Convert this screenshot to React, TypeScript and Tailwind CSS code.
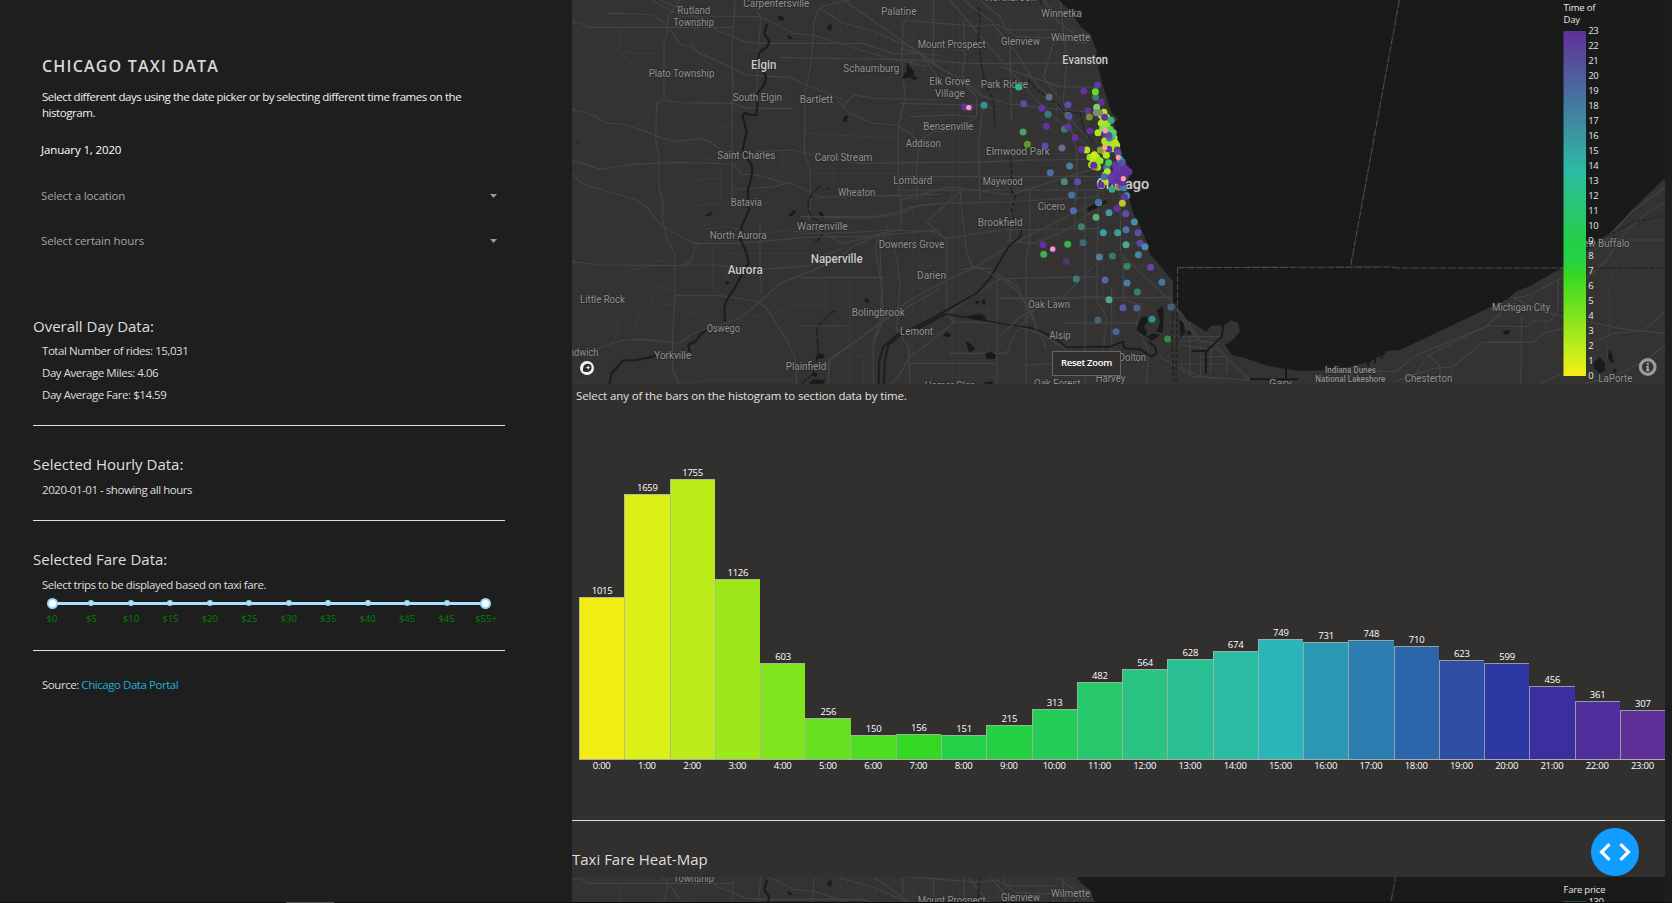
import React from "react";

type Label = [string, number, number, number, ("city" | "big" | "small")?];

const LABELS: Label[] = [
  ["Carpentersville", 743.3, 809.3, 6.7],
  ["Rutland", 677.3, 710.3, 14],
  ["Township", 673.3, 714, 26.3],
  ["Palatine", 881.3, 916.3, 15],
  ["Plato Township", 648.7, 714.3, 77],
  ["Elgin", 751, 776.3, 69, "city"],
  ["Schaumburg", 843.3, 899.3, 71.7],
  ["South Elgin", 732.7, 782, 100.5],
  ["Bartlett", 799.7, 833, 102.7],
  ["Saint Charles", 717.3, 775.3, 159.3],
  ["Carol Stream", 814.7, 872.3, 160.6],
  ["Lombard", 893.3, 932.3, 184.3],
  ["Wheaton", 838, 875.3, 195.6],
  ["Batavia", 730.7, 762, 206.3],
  ["Warrenville", 797, 847.7, 230],
  ["North Aurora", 709.7, 766.7, 238.6],
  ["Naperville", 810.7, 862.7, 263.3, "city"],
  ["Aurora", 727.7, 762.7, 274.3, "city"],
  ["Little Rock", 580, 625, 303.3],
  ["Bolingbrook", 851.7, 904.7, 316],
  ["Oswego", 706.7, 740, 331.6],
  ["Lemont", 900, 933, 335.3],
  ["Yorkville", 654.3, 691.3, 359.3],
  ["Sandwich", 558.5, 598.3, 355.8],
  ["Plainfield", 785.7, 826.3, 369.6],
  ["Northbrook", 985.3, 1035.7, 0.7],
  ["Winnetka", 1041.3, 1081.7, 17],
  ["Wilmette", 1051, 1090.3, 40.7],
  ["Glenview", 1001, 1040, 44.7],
  ["Mount Prospect", 917.7, 985.7, 47.5],
  ["Evanston", 1062.3, 1108, 64, "city"],
  ["Elk Grove", 929.3, 970.3, 85],
  ["Village", 935, 964.7, 97],
  ["Park Ridge", 980.7, 1028, 87.9],
  ["Bensenville", 923.3, 973.3, 130],
  ["Addison", 905.7, 940.7, 146.5],
  ["Elmwood Park", 986, 1049.7, 154.7],
  ["Maywood", 982.7, 1022.7, 185],
  ["Chicago", 1096.3, 1149.3, 189, "big"],
  ["Cicero", 1037.7, 1065.3, 209.5],
  ["Brookfield", 977.7, 1022.7, 226.2],
  ["Oak Lawn", 1028.3, 1070, 308.3],
  ["Alsip", 1049.3, 1070.7, 338.6],
  ["Dolton", 1119, 1146, 360.9],
  ["Harvey", 1095.7, 1125.3, 382],
  ["Oak Forest", 1034, 1080.3, 386.5],
  ["Downers Grove", 878.7, 944.3, 247.6],
  ["Darien", 917, 946, 279.2],
  ["Homer Glen", 924.7, 975.3, 388.6],
  ["Michigan City", 1492, 1550, 310.6],
  ["New Buffalo", 1576, 1629.7, 246.5],
  ["LaPorte", 1598.3, 1632.3, 381.5],
  ["Chesterton", 1404.7, 1452.3, 381.5],
  ["Indiana Dunes", 1325, 1376, 372.9, "small"],
  ["National Lakeshore", 1315.3, 1385.3, 381.9, "small"],
  ["Gary", 1269, 1291.7, 387],
];

const SHORE =
  "M1059 0 L1069 10 1081 27 1091 35 1094 45 1097 50 1096 56 1099 71 1103 86 1108 102 1112 113 1118 119 1114 124 1118 145 1124 160 1132 172 1128 181 1129 198 1133 213 1140 226 1146 240 1150 254 1157 262 1166 273 1173 281 1173 300 1178 308 1186 319 1196 325 1206 332 1211 326 1219 325 1222 327 1231 320 1238 323 1240 331 1234 339 1225 345 1232 355 1245 358 1268 366 1300 371 1335 370 1370 362 1375 358 1384 355 1386 351 1400 350 1440 331 1478 313 1508 299 1515 292 1530 286 1558 270 1592 246 1612 231 1632 210 1645 197 1665 178 1665 0 Z";

const ROADS_WEST = [
  "M36 68 60 68 85 82 300 82 520 82",
  "M140 40 190 40 280 45 320 75 365 135 395 140 415 157 560 225 690 232 740 255 850 300",
  "M275 0 345 40 M300 0 380 35 480 95 555 125 590 130 910 130 1000 160 1140 165",
  "M360 0 325 50 322 100 312 130 312 300",
  "M525 0 522 60 515 150 518 250 517 350 515 400 517 540 515 600",
  "M580 0 603 60 595 130 590 280",
  "M345 48 600 50 700 100 770 108 900 150 1000 178 1100 200",
  "M36 328 100 345 137 370 185 372 260 395 300 412 350 425 420 415 450 425 490 455 530 460",
  "M290 315 310 300 360 308 520 310 560 325 700 325",
  "M290 305 287 420 297 470 297 560 308 600 308 660 318 710 345 765 345 880 338 1000 338 1110 357 1152",
  "M36 485 60 487 120 508 220 493 350 487 520 492 545 522 600 527 660 545 700 552 780 592 1140 583",
  "M36 522 70 553 230 600 260 620 300 672 380 720 410 730 540 730 740 712 940 708 1140 690",
  "M36 785 120 795 370 797 395 780 405 740 420 730",
  "M370 795 460 795 600 808 680 803 750 797 780 770 850 745",
  "M80 1055 190 1020 250 1018 360 1030 400 1000 430 990 540 955 600 905 660 850 750 815 830 780 870 745 960 700",
  "M345 887 480 887 590 903 620 925 680 1020 705 1070 710 1152",
  "M600 660 600 800 605 880",
  "M870 0 780 20 762 60 755 180 735 280 733 460 750 500 752 600 745 660",
  "M780 25 850 70 930 90 1010 125 1060 145 1140 200",
  "M850 315 885 285 940 295 1140 300",
  "M830 300 870 340 940 370 1010 375 1050 400 1080 430 1140 445",
  "M655 172 800 175 1000 178 1140 180",
  "M590 455 700 450 760 465 900 490 1140 487",
  "M1050 40 1030 70 1025 180 1035 290 1015 380 1015 560 1025 640 1020 690 960 700 945 740 965 860 970 960 940 1030",
  "M790 652 920 655 1000 640 1060 620 1140 610",
  "M1140 865 1080 900 960 970 880 1030 810 1080 805 1152",
  "M850 0 980 90 1080 160 1140 240",
  "M700 695 770 690 850 730 940 708",
  "M515 570 640 560 690 548",
];

const MINOR_WEST = [
  "M178 82 178 150 100 185 60 200 36 210",
  "M178 158 290 160 312 155 M178 158 250 220 300 290",
  "M405 80 395 140 M400 135 430 180 520 245",
  "M392 540 392 618 480 610 482 500 M392 540 480 535",
  "M345 400 370 425 410 470 480 485",
  "M480 380 515 375 M410 410 480 375",
  "M150 930 175 980 155 1050",
  "M160 850 200 815 280 795 M282 860 340 870 M282 860 276 910 340 915",
  "M345 925 400 945 440 910 500 887",
  "M250 920 225 975 212 1010",
  "M360 1152 450 1140 560 1142 700 1140",
  "M457 725 457 880 M500 797 500 870",
  "M500 760 750 760 M680 690 680 800",
  "M695 915 800 915 M797 830 797 940 M870 830 870 1152",
  "M560 325 620 325 610 350 575 380",
  "M735 400 1015 415 M735 520 1015 520 M820 470 820 560",
  "M840 0 840 100 M905 60 905 130 M945 60 945 130 M560 200 620 190",
  "M770 980 870 980 M810 1070 940 1070 M790 830 1140 830",
  "M420 690 515 680 540 690 M600 700 700 690",
  "M910 1080 910 1152 M1050 1000 1050 1152",
  "M540 955 690 930 M36 1145 90 1150",
  "M545 150 600 150 M45 110 50 100 M315 265 325 257 M265 335 265 348",
  "M655 512 672 460 M665 510 680 470 M275 765 300 790 M298 770 298 788 M280 785 320 783",
];

const ROADS_CITY = [
  "M0 145 60 160 110 200 160 225 200 250 250 290 330 312 600 340",
  "M150 0 200 60 260 130 320 200 400 290 450 340 520 400 590 460 620 500 640 560",
  "M190 0 270 60 350 160 400 240 470 315 570 420",
  "M240 0 300 50 320 90 350 110 480 115 560 130",
  "M430 0 480 70 560 130 M460 130 440 200 430 230 480 300",
  "M0 60 240 80 290 72 320 90 460 90",
  "M0 185 100 183 200 190 330 190 590 188",
  "M190 60 195 170 185 240 230 290 230 350 170 390 100 395 60 420 50 500 50 600",
  "M250 320 235 420 240 600 M480 0 500 180 490 300 530 450 530 600",
  "M0 487 200 487 400 480 620 478 M0 570 640 570",
  "M0 310 250 316 290 330 M30 350 160 345 230 350",
  "M0 530 640 530 M330 130 335 360 M0 600 150 560 330 585 600 500",
  "M100 0 100 180 M160 150 195 150 M300 200 480 260 590 262",
];

const ROADS_SOUTH = [
  "M0 80 150 80 270 78 320 65 360 45 440 40 640 35 900 20",
  "M0 130 150 128 265 120 400 125 440 145 600 120 900 115",
  "M85 585 85 510 200 430 330 330 440 270 520 235 570 235 610 265 650 285 690 370 720 430 740 480",
  "M480 0 485 60 500 190 520 235 640 160 900 30",
  "M485 0 440 40 380 95 440 150 440 370 465 400",
  "M620 150 700 160 780 130 830 100 880 60",
  "M265 100 240 170 245 300 240 400 220 450 220 585",
  "M265 130 290 200 300 280 290 420 325 470 330 585",
  "M600 265 450 365 465 395 385 460 330 500 300 550 270 585",
  "M590 270 640 265 900 260 M600 325 720 325 900 320",
  "M465 395 620 400 720 430 800 480 M690 0 690 160 678 200 678 585",
  "M590 270 590 585 M330 520 585 520 M450 490 620 490 645 430 710 350",
  "M0 408 140 408 M0 263 250 263 M640 0 630 150",
];

const ROADS_SE = [
  "M480 0 482 190 500 210 560 265 640 340 680 410 720 455 780 460",
  "M345 0 345 120 M375 0 375 580 M415 0 410 330 440 380 420 580",
  "M490 200 490 330 545 345 530 400 545 440 565 480 560 580",
  "M455 290 455 580 M310 320 380 250 400 230",
  "M110 325 640 322 M310 400 540 400 M200 525 280 520",
  "M0 240 50 230 120 265 170 300 220 380 230 430 M120 440 180 380 300 320",
  "M640 440 780 440 M660 465 780 480 M690 380 690 560 M600 500 700 560 780 565",
];

const ROADS_EAST = [
  "M700 1130 745 1065 920 978 960 945 960 930",
  "M560 1113 650 1115 700 1070 920 978 1040 980 1060 963 1110 963 1135 930 1135 840",
  "M640 1145 760 1105 820 1100 910 1027 1060 1027 1090 1000 1150 985",
  "M1000 895 1050 885 1150 830 1280 720",
  "M1215 840 1280 780 1340 690 1400 640 1455 605",
  "M1260 740 1350 640 1455 560",
  "M1025 950 1022 1152 M1000 895 1090 935 1200 960 1320 985 1455 1000",
  "M1220 1035 1300 1000 1390 993 1455 935",
  "M1215 1150 1300 1130 1400 1080 1455 1035",
  "M1260 720 1455 720 M1080 1152 1180 1105",
  "M0 935 30 980 60 1020 100 1030 160 1090 210 1140",
  "M0 1025 60 1020 62 1130 M0 1100 60 1130 200 1140 350 1138 M95 1030 90 1120 M60 1070 140 1070 140 1120 M0 1092 130 1092",
  "M745 1065 780 1100 780 1150 M400 1150 560 1113",
];

const MINOR_EAST = [
  "M1275 720 1305 800 1285 880 1292 930 1285 1010 1280 1080",
  "M1090 930 1100 990 1150 1030 M1215 1000 1260 1060 1275 1100",
  "M820 1080 815 1150 M600 1100 600 1140",
];

const RIVERS_WEST = [
  "M622 72 612 100 628 125 622 140 597 158 595 180 618 230 612 255 592 280 592 320 588 345 570 345 553 338 548 350 560 395 548 450 577 500 575 530 563 570 567 630 545 680 540 715 560 760 566 790 540 835 520 870 500 900 493 925 495 965",
  "M440 990 425 1000 405 1025 385 1035 390 1060 M290 1067 230 1080 190 1082 155 1120 148 1152",
];
const STREAMS_WEST = [
  "M780 560 760 575 745 600 745 635 760 655 780 665 790 690 780 715 765 725",
  "M828 932 810 940 770 985 775 1060 760 1120 725 1150",
  "M805 563 800 570 M780 635 790 650",
];

const PONDS_WEST =
  "M655 48 670 50 672 62 655 60Z M812 68 816 85 808 94 800 82 806 78Z M682 105 692 108 698 118 686 116Z M1040 182 1048 200 1062 212 1062 228 1076 234 1060 240 1052 232 1028 236 1030 224 1040 215Z M850 350 864 346 860 362 850 368Z M460 635 450 648 435 648 445 640Z M708 635 700 646 682 650 692 638 702 630Z M775 633 790 642 790 656 778 644Z M500 842 510 846 502 854 495 850Z M914 896 926 896 926 908 914 906Z M775 1060 790 1062 793 1074 765 1076Z M760 1115 772 1120 770 1132 756 1126Z M750 1145 760 1138 796 1140 790 1152 748 1152Z M50 424 56 424 55 430 50 428Z";
const PONDS_SOUTH =
  "M500 378 520 374 545 373 560 386 545 391 515 388Z M430 438 440 425 455 434 445 442Z M496 452 512 462 526 476 508 488Z M555 492 572 484 588 495 585 506 560 506Z M524 338 530 332 542 335 530 342Z M545 330 556 330 554 346 547 343Z M556 576 578 574 578 584 550 584Z";
const PONDS_SE =
  "M535 400 545 382 560 378 562 395 552 410 562 428 556 440 540 430 530 420Z M590 360 606 350 612 365 608 430 590 425 600 395Z M560 440 580 430 600 435 575 452Z M660 390 670 400 675 430 660 445Z M682 428 692 424 694 434 684 436Z M380 55 400 42 442 30 440 38 410 55 385 66Z";
const PONDS_EAST =
  "M968 992 990 990 990 998 976 1006Z M1240 1090 1260 1070 1275 1090 1275 1110 1260 1120 1242 1105Z M1288 1045 1295 1060 1302 1090 1290 1085 1284 1070Z M1300 1105 1310 1108 1308 1118 1300 1116Z M20 994 32 992 34 1004 24 1006Z";

type Dot = [number, number, string];

const P = "#6431a0";
const I = "#5a4fa6";
const B = "#4b6ea8";
const T = "#3a8ea0";
const L = "#b4e61e";
const LG = "#98e81c";

const DOTS_NORTH: Dot[] = [
  [14, 111, P], [29, 113, P], [72, 106, T], [176, 51, "#34b184"], [267, 81, "#626a8c"], [191, 101, I], [246, 115, P],
  [264, 133, "#3a7a7a"], [324, 104, I], [324, 136, "#3f8a4a"], [327, 139, I], [371, 64, P], [412, 46, "#5a3aa8"],
  [407, 82, "#3a7f6e"], [406, 65, "#64e01f"], [423, 97, P], [384, 122, P], [388, 141, "#7a9030"], [259, 169, P],
  [313, 178, "#357f6a"], [324, 170, P], [189, 186, "#4aa06a"], [202, 223, "#5f9a28"], [255, 228, I], [306, 234, "#66708c"],
  [345, 203, P], [389, 183, P], [329, 288, "#4a7c9c"], [271, 308, B], [313, 335, "#4f8a70"], [353, 335, I],
  [335, 375, B], [340, 422, B], [380, 240, L], [414, 188, L], [410, 112, "#7ed060"],
  [432, 127, L], [424, 136, LG], [440, 142, LG], [430, 150, L], [424, 160, L], [442, 160, L], [436, 170, LG], [428, 176, "#8ede60"],
  [444, 186, L], [452, 194, L], [440, 205, L], [434, 213, L], [462, 204, L], [466, 218, L], [452, 224, L], [438, 224, L], [450, 212, LG],
  [470, 226, L], [446, 238, L], [458, 236, LG], [432, 244, "#98c838"], [409, 128, "#858878"], [418, 128, "#858878"],
  [453, 151, "#34b184"], [450, 178, "#55d858"], [460, 188, "#55d858"], [456, 200, "#55b888"], [434, 142, P],
  [434, 192, P], [448, 204, "#5b72a8"], [446, 196, I], [421, 240, "#8a9a30"], [446, 238, P], [472, 240, P],
  [364, 238, P], [390, 262, LG], [410, 262, LG], [400, 272, L], [420, 272, LG], [408, 282, LG], [413, 292, LG], [395, 284, L], [403, 254, "#d4e81c"],
  [404, 290, "#8a9a30"], [401, 286, P], [439, 256, L], [440, 292, B], [442, 305, L], [436, 315, L], [446, 278, "#3cd04a"],
  [434, 335, L], [433, 320, B], [423, 345, P], [480, 268, T], [486, 275, T], [474, 250, I],
  [456, 358, "#34a890"], [476, 352, "#9a9038"], [484, 348, "#6a4a98"], [491, 353, "#4080a0"],
  [465, 284, P], [476, 290, P], [488, 290, P], [498, 298, P], [507, 305, P], [496, 310, P], [482, 302, P], [470, 300, P],
  [462, 312, P], [478, 316, P], [492, 322, P], [466, 326, P], [457, 334, P], [474, 332, P], [486, 338, P], [452, 322, "#5f3aa8"],
  [470, 295, "#5f3aa8"], [486, 280, I],
  [500, 377, T], [493, 382, P],
];

const DOTS_SOUTH: Dot[] = [
  [416, 38, "#3a9a80"], [415, 37, B], [408, 82, "#5fae68"], [487, 40, "#b4cc20"], [471, 55, P], [447, 68, "#4694a4"], [497, 71, I],
  [523, 96, "#4a8ca8"], [364, 110, "#3f8078"], [369, 158, "#3a6c74"], [323, 163, "#38b04c"], [249, 164, P], [251, 193, "#45aa4c"],
  [279, 178, P], [319, 214, "#50386c"], [430, 128, "#38a09c"], [473, 128, "#38a08c"], [498, 119, "#4f70ac"],
  [534, 128, I], [498, 164, "#4aa890"], [540, 160, "#5f44a8"], [555, 170, "#4a8cb0"], [535, 194, "#4488a0"], [418, 201, "#4f8098"],
  [457, 198, "#397878"], [501, 229, "#318a58"], [572, 232, "#6a40a8"], [349, 267, "#387a78"], [435, 270, "#5466a4"],
  [501, 279, "#4a7ca4"], [606, 277, "#4478a0"], [532, 306, "#34806c"], [447, 329, "#4ca884"], [489, 353, "#5a58a8"],
  [530, 354, "#4a6490"], [633, 351, "#44607c"], [414, 390, "#40647a"], [576, 388, "#2f9090"], [468, 425, "#4a6498"], [623, 447, "#2e8c44"],
];

const HIGHLIGHTS: [number, number][] = [
  [968.7, 107.5], [1105.3, 130.7], [1104.7, 147.7], [1118.3, 157.3], [1123.3, 178.7], [1052.7, 249],
];

function Paths({ list, color, width, dash }: { list: string[]; color: string; width: number; dash?: string }) {
  return (
    <g fill="none" stroke={color} strokeWidth={width} strokeDasharray={dash} strokeLinejoin="round">
      {list.map((d) => (
        <path key={d} d={d} />
      ))}
    </g>
  );
}

function StreetGrid() {
  const lines: React.ReactElement[] = [];
  for (let i = 0; i < 27; i++) {
    const x = 902 + i * 9.6 + (i % 3);
    lines.push(<path key={"v" + i} d={`M${x} ${i % 2 ? 0 : 12} V${i % 4 === 0 ? 250 : 384}`} />);
  }
  for (let i = 0; i < 34; i++) {
    const y = 8 + i * 11.2;
    lines.push(<path key={"h" + i} d={`M${i % 2 ? 905 : 990 + (i % 5) * 12} ${y} H1176`} />);
  }
  return (
    <g fill="none" stroke="#3a3a3a" strokeWidth="0.8">
      {lines}
    </g>
  );
}

function BaseMap() {
  return (
    <>
      <rect x="560" y="0" width="1110" height="400" fill="#343332" />
      <StreetGrid />
      <g transform="translate(560 0) scale(.33333)">
        <Paths list={MINOR_WEST} color="#3e3e3f" width={2.4} />
        <Paths list={ROADS_WEST} color="#424346" width={3.6} />
        <Paths list={RIVERS_WEST} color="#1b1c1c" width={6.5} />
        <Paths list={STREAMS_WEST} color="#1f2020" width={4.5} dash="22 5" />
        <path d={PONDS_WEST} fill="#191a1a" />
      </g>
      <g transform="translate(900 0) scale(.33333)">
        <Paths list={ROADS_CITY} color="#434447" width={3.6} />
        <Paths
          list={[
            "M235 20 240 60 235 120 245 200 255 250 280 300 285 380",
            "M330 470 335 520 330 560 340 600",
            "M385 240 410 270 470 310 490 333 540 338 552 390 580 430",
            "M420 0 430 20",
          ]}
          color="#202121"
          width={4.5}
          dash="14 5"
        />
      </g>
      <g transform="translate(800 190) scale(.33333)">
        <Paths list={ROADS_SOUTH} color="#424346" width={3.6} />
        <Paths
          list={[
            "M665 120 660 140 625 170 590 230 570 265 530 310 450 355 360 405 290 435 250 470 238 510 236 585",
            "M435 372 360 413 300 436 265 465 255 510 251 585",
          ]}
          color="#1d1e1e"
          width={6}
        />
        <Paths list={["M435 372 520 385 600 400 700 415 760 440 800 472 900 470"]} color="#1d1e1e" width={5} />
        <path d={PONDS_SOUTH} fill="#191a1a" />
      </g>
      <g transform="translate(960 190) scale(.33333)">
        <Paths list={ROADS_SE} color="#424346" width={3.6} />
        <Paths
          list={["M400 470 450 470 490 455 492 475 540 478 575 500 590 490 585 470 565 455", "M605 350 605 420"]}
          color="#1b1c1c"
          width={6}
        />
        <Paths list={["M155 0 165 20 155 60 160 90"]} color="#202121" width={4.5} dash="14 5" />
        <path d={PONDS_SE} fill="#191a1a" />
        <Paths list={["M642 330 636 420 640 580", "M652 330 648 580"]} color="#222323" width={5} dash="12 6" />
      </g>
      <path d={SHORE} fill="#191a1a" />
      <g transform="translate(1180 0) scale(.33333)">
        <Paths list={MINOR_EAST} color="#3e3e3f" width={2.4} />
        <Paths list={ROADS_EAST} color="#424346" width={3.6} />
        <Paths
          list={[
            "M35 1053 80 1053 125 1010 130 980",
            "M78 1053 78 1120",
            "M210 1138 355 1138",
            "M318 1105 318 1135",
            "M565 1080 565 1100 M585 1075 585 1090 M605 1058 605 1075",
            "M0 965 15 1000",
          ]}
          color="#191a1a"
          width={6}
        />
        <Paths list={["M1280 710 1360 665 1400 658 1455 645"]} color="#232424" width={4} dash="12 5" />
        <path d={PONDS_EAST} fill="#191a1a" />
        <path d="M658 0 L511 803 M-8 803 L640 801 L645 804 L1150 804" stroke="#4b4b4a" strokeWidth="3.4" strokeDasharray="24 4" fill="none" />
        <path d="M1220 804 H1455" stroke="#252525" strokeWidth="4" strokeDasharray="14 5" />
      </g>
      <path d="M1177.5 268 V310" stroke="#4b4b4a" strokeDasharray="6 2" />
      <g fontFamily="Roboto, 'Noto Sans', sans-serif" stroke="#2a2a29" strokeWidth="1.6" strokeLinejoin="round" style={{ paintOrder: "stroke" }}>
        {LABELS.map(([name, x1, x2, y, kind]) => (
          <text
            key={name}
            x={x1}
            y={y}
            textLength={x2 - x1}
            lengthAdjust="spacingAndGlyphs"
            fontSize={kind === "big" ? 15 : kind === "city" ? 12 : kind === "small" ? 8.5 : 10.5}
            fontWeight={kind ? 500 : 400}
            fill={kind === "big" || kind === "city" ? "#cacaca" : "#929291"}
          >
            {name}
          </text>
        ))}
      </g>
    </>
  );
}

function RideMap() {
  return (
    <div className="relative h-[384px] shrink-0 overflow-hidden">
      <svg className="block h-[384px] w-[1093px]" viewBox="572 0 1093 384">
        <defs>
          <linearGradient id="hours" x1="0" y1="1" x2="0" y2="0">
            <stop offset="0" stopColor="#f4ec15" />
            <stop offset="0.04" stopColor="#daf017" />
            <stop offset="0.13" stopColor="#9de81b" />
            <stop offset="0.295" stopColor="#34d822" />
            <stop offset="0.34" stopColor="#24d249" />
            <stop offset="0.385" stopColor="#25d042" />
            <stop offset="0.59" stopColor="#2bbca4" />
            <stop offset="1" stopColor="#613099" />
          </linearGradient>
        </defs>
        <BaseMap />
        <g transform="translate(960 70) scale(.33333)">
          {DOTS_NORTH.map(([x, y, c], i) => (
            <circle key={i} cx={x} cy={y} r="10.5" fill={c} />
          ))}
        </g>
        <g transform="translate(960 190) scale(.33333)">
          {DOTS_SOUTH.map(([x, y, c], i) => (
            <circle key={i} cx={x} cy={y} r="10.5" fill={c} />
          ))}
        </g>
        {HIGHLIGHTS.map(([x, y]) => (
          <circle key={x} cx={x} cy={y} r="2.6" fill="#ffa0a0" />
        ))}
        <rect x="1563.5" y="31" width="22.5" height="345" fill="url(#hours)" />
        <g fontFamily="'Open Sans', sans-serif" fontSize="9.5" fill="#e6e6e6">
          <text x="1563.5" y="11" textLength="32">Time of</text>
          <text x="1563.5" y="23" textLength="16.5">Day</text>
          {Array.from({ length: 24 }, (_, h) => (
            <text key={h} x="1588.3" y={379 - h * 15} textLength={h > 9 ? 10.3 : 5.2}>
              {h}
            </text>
          ))}
        </g>
        <circle cx="587" cy="368" r="7" fill="#f2f2f2" />
        <path d="M583.2 371.6c-.8-4.500 1-7.800 4.600-7.800a3.900 3.900 0 0 1 3.800 3.900c0 3.600-3.700 4.900-8.400 3.900z" fill="#2a2a2a" />
        <path d="M588.100 365.200l.7 1.700 1.700.7-1.700.7-.7 1.700-.7-1.700-1.700-.7 1.700-.7z" fill="#f2f2f2" />
        <circle cx="1647.7" cy="367" r="7.300" fill="#333" stroke="#9b9b9b" strokeWidth="3.200" />
        <path d="M1646.700 362.800h2.100v2h-2.100z M1646.200 365.700h2.600v4h.8v1.500h-3.700v-1.500h.8v-2.500h-.5z" fill="#a8a8a8" />
      </svg>
      <button className="absolute top-[351px] left-[480px] flex h-[25px] w-[69px] items-center justify-center border border-[#666] bg-[#31302f] text-[9.5px] font-semibold tracking-[-0.3px] whitespace-nowrap text-white">
        Reset Zoom
      </button>
    </div>
  );
}

const HOURS: { rides: number; color: string }[] = [
  { rides: 1015, color: "#F4EC15" },
  { rides: 1659, color: "#DAF017" },
  { rides: 1755, color: "#BBEC19" },
  { rides: 1126, color: "#9DE81B" },
  { rides: 603, color: "#80E41D" },
  { rides: 256, color: "#66E01F" },
  { rides: 150, color: "#4CDC20" },
  { rides: 156, color: "#34D822" },
  { rides: 151, color: "#24D249" },
  { rides: 215, color: "#25D042" },
  { rides: 313, color: "#26CC58" },
  { rides: 482, color: "#28C86D" },
  { rides: 564, color: "#29C481" },
  { rides: 628, color: "#2AC093" },
  { rides: 674, color: "#2BBCA4" },
  { rides: 749, color: "#2BB5B8" },
  { rides: 731, color: "#2C99B4" },
  { rides: 748, color: "#2D7EB0" },
  { rides: 710, color: "#2D65AC" },
  { rides: 623, color: "#2E4EA4" },
  { rides: 599, color: "#2E38A4" },
  { rides: 456, color: "#3B2FA0" },
  { rides: 361, color: "#4E2F9C" },
  { rides: 307, color: "#603099" },
];

function Histogram() {
  return (
    <div className="grid h-[364px] grid-cols-24 pl-[7px] text-center text-[9.5px] text-white">
      {HOURS.map(({ rides, color }, hour) => (
        <div key={hour} className="flex flex-col justify-end">
          <span className="h-[13px] pl-px leading-[14px] tracking-[-0.25px]">{rides}</span>
          <div className="border-t border-l border-[#aab2a8]/80" style={{ height: rides * 0.1597, backgroundColor: color }} />
          <span className="h-[12px] border-t border-[#aaa] leading-[11px] tracking-[-0.25px]">{hour}:00</span>
        </div>
      ))}
    </div>
  );
}

const FARES = ["$0", "$5", "$10", "$15", "$20", "$25", "$30", "$35", "$40", "$45", "$45", "$55+"];

function FareSlider() {
  return (
    <div className="mt-1 ml-[19px] w-[434px]">
      <div className="relative flex h-3 items-center justify-between">
        <div className="absolute inset-x-0 h-[3px] bg-[#abe2fb]" />
        {FARES.map((_, i) => (
          <div key={i} className="relative flex w-0 justify-center">
            {i === 0 || i === FARES.length - 1 ? (
              <span className="size-[11px] shrink-0 rounded-full border-2 border-[#96dbfa] bg-white" />
            ) : (
              <span className="size-[6px] shrink-0 rounded-full border-2 border-[#96dbfa] bg-[#d8f1fd]" />
            )}
          </div>
        ))}
      </div>
      <div className="mt-1 flex h-3 justify-between text-[9.5px] leading-3 text-[#008000]">
        {FARES.map((fare, i) => (
          <span key={i} className="flex w-0 justify-center whitespace-nowrap">
            {fare}
          </span>
        ))}
      </div>
    </div>
  );
}

function Caret() {
  return (
    <svg className="mr-2 mb-px h-1 w-[7px]" viewBox="0 0 7 4">
      <path d="M0 0h7L3.500 4z" fill="#999" />
    </svg>
  );
}

function Sidebar() {
  return (
    <aside className="h-[902px] w-[572px] shrink-0 bg-[#1e1e1e] pt-14 pl-[33px] text-[11.5px] leading-4 tracking-[-0.45px] text-[#dedede]">
      <div className="flex w-[472px] flex-col">
        <h2 className="ml-[9px] text-[16px] leading-5 font-semibold tracking-[1.2px] text-[#d8d8d8]">CHICAGO TAXI DATA</h2>
        <p className="mt-[13px] ml-[9px] text-[#f0f0f0]">
          Select different days using the date picker or by selecting different time frames on the
          <br />
          histogram.
        </p>
        <div className="mt-[21px] ml-2 tracking-[-0.13px] text-white">January 1, 2020</div>
        <div className="mt-[30px] ml-2 flex items-center justify-between tracking-[-0.15px] text-[#a4a4a4]">
          Select a location
          <Caret />
        </div>
        <div className="mt-[29px] ml-2 flex items-center justify-between tracking-[-0.15px] text-[#a4a4a4]">
          Select certain hours
          <Caret />
        </div>
        <h3 className="mt-[67px] text-[15px] leading-5 tracking-normal">Overall Day Data:</h3>
        <p className="mt-[7px] ml-[9px]">Total Number of rides: 15,031</p>
        <p className="mt-1.5 ml-[9px]">Day Average Miles: 4.06</p>
        <p className="mt-1.5 ml-[9px]">Day Average Fare: $14.59</p>
        <hr className="mt-[22px] border-[#e1e1e1]" />
        <h3 className="mt-7 text-[15px] leading-5 tracking-normal">Selected Hourly Data:</h3>
        <p className="mt-2 ml-[9px]">2020-01-01 - showing all hours</p>
        <hr className="mt-[22px] border-[#e1e1e1]" />
        <h3 className="mt-7 text-[15px] leading-5 tracking-normal">Selected Fare Data:</h3>
        <p className="mt-2 ml-[9px]">Select trips to be displayed based on taxi fare.</p>
        <div className="tracking-normal">
          <FareSlider />
        </div>
        <hr className="mt-[25px] border-[#e1e1e1]" />
        <p className="mt-[26px] ml-[9px]">
          Source: <a className="text-[#1eaedb]">Chicago Data Portal</a>
        </p>
      </div>
    </aside>
  );
}

export default function App() {
  return (
    <div className="flex h-[903px] w-[1672px] flex-col overflow-hidden bg-[#0c0c0c] font-['Open_Sans',sans-serif]">
      <div className="flex h-[902px] bg-[#1e1e1e]">
        <Sidebar />
        <main className="relative flex h-[902px] w-[1093px] flex-col overflow-hidden bg-[#31302f]">
          <RideMap />
          <p className="mt-1 pl-1 text-[11.5px] leading-4 tracking-[-0.115px] text-[#e0e0e0]">
            Select any of the bars on the histogram to section data by time.
          </p>
          <div className="mt-[3px]">
            <Histogram />
          </div>
          <hr className="mt-[49px] border-[#e1e1e1]" />
          <h3 className="mt-7 h-7 text-[15px] leading-5 text-[#dedede]">Taxi Fare Heat-Map</h3>
          <svg className="block h-[25px] w-[1093px] shrink-0" viewBox="572 21 1093 25">
            <BaseMap />
            <g fontFamily="'Open Sans', sans-serif" fontSize="9.5" fill="#e6e6e6">
              <text x="1563.5" y="36.7" textLength="42">Fare price</text>
              <text x="1588.5" y="48.500" textLength="15.500">130</text>
            </g>
            <path d="M1563.500 45.500h22.500" stroke="#0d5748" />
          </svg>
          <button className="absolute top-[828px] left-[1019px] flex size-12 items-center justify-center rounded-full bg-[#119dff]">
            <svg className="h-[18px] w-8" viewBox="0 0 32 18" fill="none" stroke="#fff" strokeWidth="3.200">
              <path d="M10.500 1.200 2.600 9l7.900 7.800M21.500 1.200 29.400 9l-7.900 7.800" />
            </svg>
          </button>
        </main>
      </div>
      <div className="flex h-px pl-[286px]">
        <span className="h-px w-12 bg-[#555]" />
      </div>
    </div>
  );
}
